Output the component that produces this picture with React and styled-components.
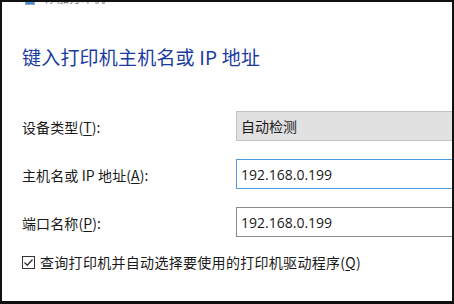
import React from "react";
import styled, { createGlobalStyle } from "styled-components";

const Global = createGlobalStyle`
  html, body { margin: 0; padding: 0; background: #111111; }
  body { width: 454px; height: 304px; overflow: hidden; }
  #root { width: 454px; height: 304px; }
`;

const Frame = styled.div`
  width: 454px;
  height: 304px;
  box-sizing: border-box;
  padding: 2px 2px 3px 2px;
  background: #111111;
`;

const Window = styled.div`
  width: 100%;
  height: 100%;
  background: #ffffff;
  overflow: hidden;
  display: flex;
  flex-direction: column;
  font-family: "Open Sans", "Noto Sans CJK SC", sans-serif;
  color: #1a1a1a;
`;

const TopStrip = styled.div`
  height: 4px;
  overflow: hidden;
  display: flex;
  align-items: flex-end;
  padding-left: 23px;
`;

const TopInner = styled.div`
  display: flex;
  align-items: center;
  gap: 10px;
  height: 16px;
  flex: none;
`;

const TopIcon = styled.div`
  width: 10px;
  height: 14px;
  border: 1px solid #9aa4b0;
  background: linear-gradient(#e8eef5 70%, #3a8ee0 70%);
  box-sizing: border-box;
`;

const TopText = styled.span`
  font-family: "Noto Sans CJK SC", sans-serif;
  font-size: 12px;
  line-height: 16px;
  color: #808080;
`;

const Heading = styled.h1`
  margin: 38px 0 0 20px;
  font-family: "Noto Sans CJK SC", sans-serif;
  font-weight: 400;
  font-size: 19px;
  line-height: 26px;
  letter-spacing: 0.2px;
  color: #1a3aa0;
  white-space: nowrap;
`;

const Form = styled.div`
  margin: 41px 0 0 20px;
  display: grid;
  grid-template-columns: 214px 260px;
  row-gap: 18px;
`;

const Label = styled.label`
  font-family: "Noto Sans CJK SC", sans-serif;
  font-size: 14px;
  line-height: 30px;
  padding-top: 1px;
  height: 30px;
  box-sizing: border-box;
  white-space: nowrap;
  letter-spacing: 0.1px;
  color: #1a1a1a;
`;

const Key = styled.span`
  text-decoration: underline;
  text-underline-offset: 2px;
`;

const Field = styled.div`
  height: 30px;
  box-sizing: border-box;
  border: 1px solid ${(p) => p.$border};
  background: ${(p) => p.$bg};
  padding-left: 4px;
  display: flex;
  align-items: center;
  font-family: ${(p) =>
    p.$cjk ? '"Noto Sans CJK SC", sans-serif' : '"Open Sans", "Noto Sans CJK SC", sans-serif'};
  font-size: 14px;
  color: #1a1a1a;
  white-space: nowrap;
`;

const CheckRow = styled.div`
  grid-column: 1 / -1;
  display: flex;
  align-items: center;
  gap: 5px;
  height: 14px;
`;

const Box = styled.div`
  width: 13px;
  height: 13px;
  box-sizing: border-box;
  border: 1px solid #333333;
  background: #fff;
  display: flex;
  align-items: center;
  justify-content: center;
  flex: none;
`;

const CheckText = styled.span`
  font-family: "Noto Sans CJK SC", sans-serif;
  font-size: 14px;
  line-height: 14px;
  letter-spacing: 0.3px;
  white-space: nowrap;
  color: #1a1a1a;
`;

export default function App() {
  return (
    <>
      <Global />
      <Frame>
        <Window>
          <TopStrip>
            <TopInner>
              <TopIcon />
              <TopText>添加打印机</TopText>
            </TopInner>
          </TopStrip>
          <Heading>键入打印机主机名或 IP 地址</Heading>
          <Form>
            <Label>
              设备类型(<Key>T</Key>):
            </Label>
            <Field $border="#c2c2c2" $bg="#e1e1e1" $cjk>
              自动检测
            </Field>
            <Label>
              主机名或 IP 地址(<Key>A</Key>):
            </Label>
            <Field $border="#4d9be2" $bg="#ffffff">
              192.168.0.199
            </Field>
            <Label>
              端口名称(<Key>P</Key>):
            </Label>
            <Field $border="#8a8a8a" $bg="#ffffff">
              192.168.0.199
            </Field>
            <CheckRow>
              <Box>
                <svg width="11" height="11" viewBox="0 0 11 11">
                  <path d="M1.5 5.5 L4.3 8.3 L9.5 2.5" fill="none" stroke="#333" strokeWidth="1.3" />
                </svg>
              </Box>
              <CheckText>
                查询打印机并自动选择要使用的打印机驱动程序(<Key>Q</Key>)
              </CheckText>
            </CheckRow>
          </Form>
        </Window>
      </Frame>
    </>
  );
}
